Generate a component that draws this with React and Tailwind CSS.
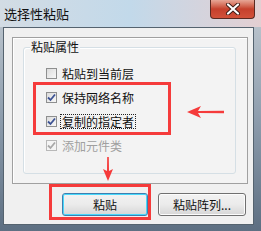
import React from 'react';

const FONT = { fontFamily: '"Noto Sans CJK SC", "Noto Sans", sans-serif' };

const Check = ({ checked, disabled }) => (
  <div
    className={`w-[11px] h-[11px] border flex items-center justify-center shrink-0 ${
      disabled ? 'border-[#b8b8b8] bg-[#f4f4f4]' : 'border-[#8e8f8f] bg-gradient-to-br from-[#dcdcdc] to-[#f8f8f8]'
    }`}
  >
    {checked && (
      <svg width="9" height="9" viewBox="0 0 9 9">
        <path
          d="M1 4.5 L3.5 7 L8 1.5"
          fill="none"
          stroke={disabled ? '#a8a8a8' : '#3d5394'}
          strokeWidth="1.8"
        />
      </svg>
    )}
  </div>
);

const Row = ({ label, checked, disabled, focus }) => (
  <div className="h-[24px] flex items-center gap-[4px]">
    <Check checked={checked} disabled={disabled} />
    <span
      className={`text-[12px] leading-[13px] px-[1px] ${disabled ? 'text-[#a0a0a0]' : 'text-[#111]'} ${
        focus ? 'outline outline-1 outline-dotted outline-[#222]' : ''
      }`}
    >
      {label}
    </span>
  </div>
);

export default function App() {
  return (
    <div
      className="relative w-[261px] h-[231px] flex flex-col bg-gradient-to-b from-[#c4ccd3] via-[#8f9eae] to-[#5d6f82] overflow-hidden"
      style={FONT}
    >
      {/* title bar */}
      <div className="h-[27px] flex items-start bg-gradient-to-r from-[#d3dce4] via-[#c2d9ea] to-[#e3cfd2]">
        <span className="pl-[4px] pt-[5px] text-[13px] leading-[17px] text-[#111]">选择性粘贴</span>
        <div className="ml-auto mr-[6px] w-[45px] h-[19px] rounded-b-[4px] border border-t-0 border-[#5a2a22] bg-gradient-to-b from-[#e6a696] via-[#c5402c] to-[#d2513a] flex items-center justify-center">
          <svg width="16" height="12" viewBox="0 0 16 12">
            <path d="M3 1.5 L13 10.5 M13 1.5 L3 10.5" stroke="#3b1a14" strokeWidth="4" strokeLinecap="round" />
            <path d="M3 1.5 L13 10.5 M13 1.5 L3 10.5" stroke="#ffffff" strokeWidth="2.2" strokeLinecap="round" />
          </svg>
        </div>
      </div>

      {/* client area */}
      <div className="ml-[3px] w-[251px] h-[198px] border border-[#55636f] bg-[#f0f0f0] flex flex-col">
        <div className="ml-[8px] mt-[9px] w-[236px] h-[147px] border border-[#a0a0a0] shadow-[inset_1px_1px_0_#ffffff] bg-[#f3f3f3]">
          <div className="relative ml-[10px] mt-[9px] w-[213px] h-[127px] border border-[#d5dfe5] rounded-[3px] shadow-[inset_1px_1px_0_#ffffff]">
            <span className="absolute left-[6px] top-[-8px] px-[1px] bg-[#f3f3f3] text-[12px] leading-[14px] text-[#111]">
              粘贴属性
            </span>
            <div className="pt-[13px] pl-[22px] flex flex-col">
              <Row label="粘贴到当前层" />
              <Row label="保持网络名称" checked />
              <Row label="复制的指定者" checked focus />
              <Row label="添加元件类" checked disabled />
            </div>
          </div>
        </div>

        <div className="ml-[58px] mt-[9px] flex gap-[10px]">
          <button className="w-[86px] h-[23px] rounded-[3px] border border-[#3c7fb1] shadow-[inset_0_0_0_1px_#48d8fb] bg-gradient-to-b from-[#f2f2f2] via-[#ebebeb] to-[#d6d6d6] text-[12px] text-[#111]">
            粘贴
          </button>
          <button className="w-[88px] h-[23px] rounded-[3px] border border-[#707070] shadow-[inset_0_0_0_1px_#fcfcfc] bg-gradient-to-b from-[#f2f2f2] via-[#ebebeb] to-[#d6d6d6] text-[12px] text-[#111]">
            粘贴阵列...
          </button>
        </div>
      </div>

      {/* annotations */}
      <div className="absolute left-[33px] top-[82px] w-[138px] h-[53px] border-[3px] border-[#f53b3b]" />
      <div className="absolute left-[49px] top-[184px] w-[102px] h-[36px] border-[3px] border-[#f53b3b]" />
      <svg className="absolute left-[186px] top-[105px]" width="40" height="14" viewBox="0 0 40 14">
        <path d="M1 7 L15 1 L12 6 L38 5.8 L38 8.2 L12 8 L15 13 Z" fill="#f53b3b" />
      </svg>
      <svg className="absolute left-[102px] top-[156px]" width="12" height="26" viewBox="0 0 12 26">
        <path d="M6 25 L1 13 L5 15 L5.2 1 L6.8 1 L7 15 L11 13 Z" fill="#f53b3b" />
      </svg>
    </div>
  );
}
